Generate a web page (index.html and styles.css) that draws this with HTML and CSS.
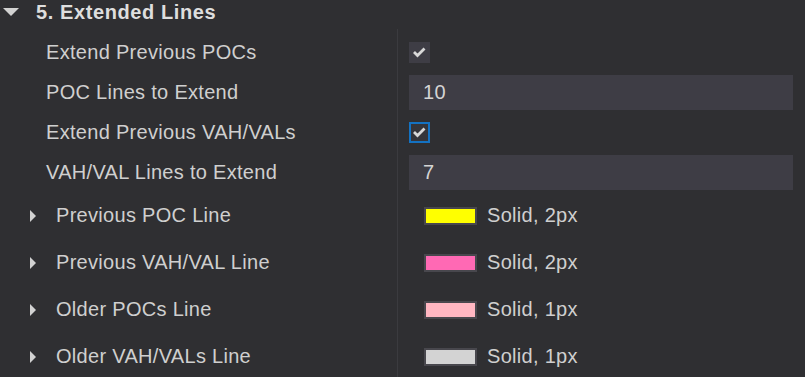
FILE: index.html
```html
<!DOCTYPE html>
<html lang="en">
<head>
    <meta charset="UTF-8">
    <title>Extended Lines</title>
    <link rel="stylesheet" href="styles.css">
</head>
<body>
    <div class="group-head">
        <span class="caret-down"></span>
        <span class="group-title">5. Extended Lines</span>
    </div>

    <div class="group-body">
        <div class="row">
            <div class="label">Extend Previous POCs</div>
            <div class="control">
                <span class="checkbox">
                    <svg width="21" height="21" viewBox="0 0 21 21"><polyline points="5,10 8.5,13.5 15.5,6.5" /></svg>
                </span>
            </div>
        </div>
        <div class="row">
            <div class="label">POC Lines to Extend</div>
            <div class="control"><div class="input">10</div></div>
        </div>
        <div class="row">
            <div class="label">Extend Previous VAH/VALs</div>
            <div class="control">
                <span class="checkbox focused">
                    <svg width="17" height="17" viewBox="2 2 17 17"><polyline points="5,10 8.5,13.5 15.5,6.5" /></svg>
                </span>
            </div>
        </div>
        <div class="row">
            <div class="label">VAH/VAL Lines to Extend</div>
            <div class="control"><div class="input">7</div></div>
        </div>

        <div class="row sub">
            <div class="label"><span class="caret-right"></span>Previous POC Line</div>
            <div class="control"><span class="swatch" style="background:#ffff00"></span>Solid, 2px</div>
        </div>
        <div class="row sub">
            <div class="label"><span class="caret-right"></span>Previous VAH/VAL Line</div>
            <div class="control"><span class="swatch" style="background:#ff69b4"></span>Solid, 2px</div>
        </div>
        <div class="row sub">
            <div class="label"><span class="caret-right"></span>Older POCs Line</div>
            <div class="control"><span class="swatch" style="background:#ffb6c1"></span>Solid, 1px</div>
        </div>
        <div class="row sub">
            <div class="label"><span class="caret-right"></span>Older VAH/VALs Line</div>
            <div class="control"><span class="swatch" style="background:#d3d3d3"></span>Solid, 1px</div>
        </div>
    </div>
</body>
</html>
```

FILE: styles.css
```css
* {
    margin: 0;
    padding: 0;
    box-sizing: border-box;
}

body {
    background: #2f2f32;
    color: #cfcfcf;
    font-family: 'Liberation Sans', Arial, sans-serif;
    font-size: 20px;
    letter-spacing: 0.3px;
    overflow: hidden;
}

.group-head {
    display: flex;
    align-items: center;
    height: 24px;
    line-height: 24px;
}

.caret-down {
    width: 0;
    height: 0;
    margin-left: 3px;
    margin-right: 17px;
    border-top: 8px solid #d2d2d2;
    border-left: 8px solid transparent;
    border-right: 8px solid transparent;
}

.group-title {
    font-weight: bold;
    letter-spacing: 0.6px;
    color: #dedede;
}

/* divider between labels and values */
.group-body {
    margin-top: 5px;
    padding-top: 3px;
    background: linear-gradient(#3b3b3f, #3b3b3f) 397px 0 / 1px 100% no-repeat;
}

.row {
    display: flex;
    align-items: center;
    height: 40px;
}

.row.sub {
    height: 47px;
}

.label {
    width: 397px;
    padding-left: 46px;
    display: flex;
    align-items: center;
}

.row.sub .label {
    padding-left: 30px;
}

.caret-right {
    width: 0;
    height: 0;
    margin-right: 20px;
    border-left: 6px solid #d2d2d2;
    border-top: 6px solid transparent;
    border-bottom: 6px solid transparent;
}

.control {
    flex: 1;
    display: flex;
    align-items: center;
    padding: 0 12px;
}

.row.sub .control {
    padding-left: 27px;
}

.checkbox {
    width: 21px;
    height: 21px;
    background: #3e3d45;
    display: flex;
    align-items: center;
    justify-content: center;
}

.checkbox.focused {
    border: 2px solid #1472c2;
    background: #35353a;
}

.checkbox svg polyline {
    fill: none;
    stroke: #d8d8d8;
    stroke-width: 2.8;
}

.input {
    width: 100%;
    height: 35px;
    line-height: 35px;
    padding-left: 14px;
    background: #3e3d45;
    color: #d4d4d4;
}

.swatch {
    width: 53px;
    height: 18px;
    margin-right: 10px;
    border: 2px solid #48474d;
}
```
